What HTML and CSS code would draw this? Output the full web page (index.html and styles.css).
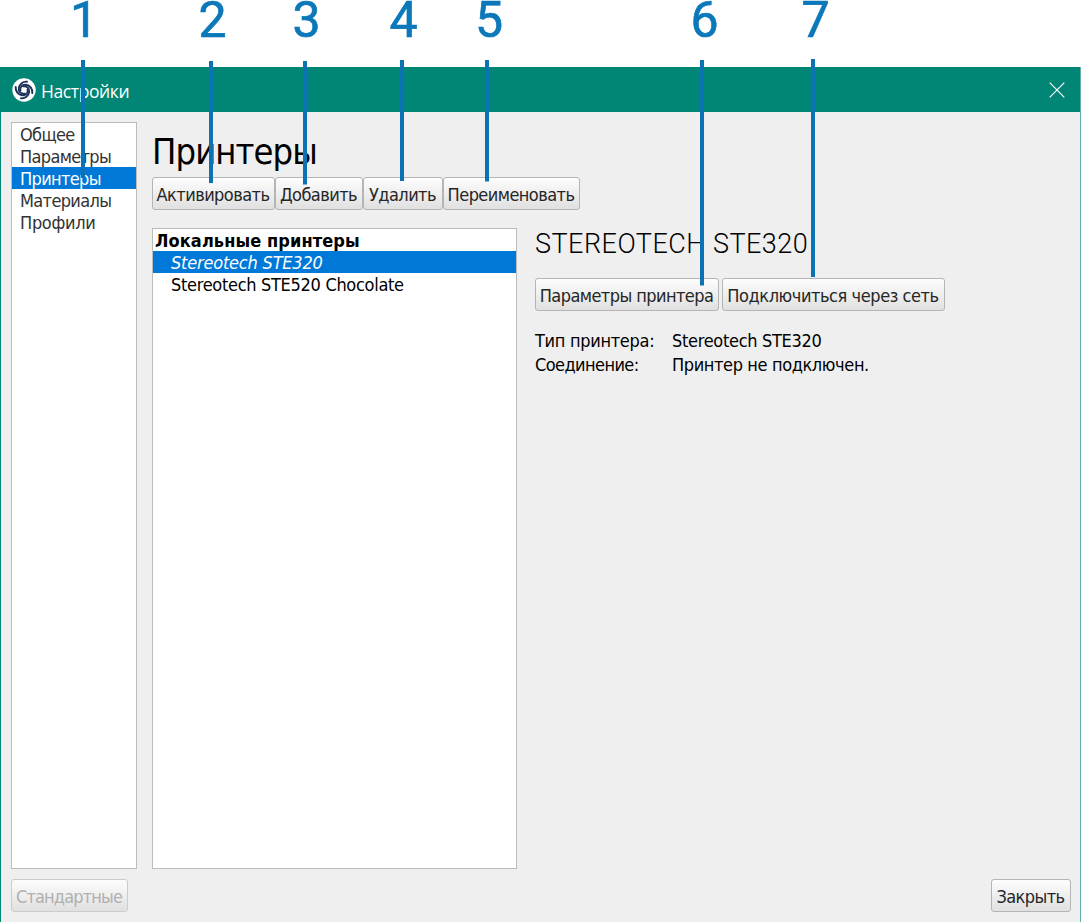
FILE: index.html
```html
<!DOCTYPE html>
<html lang="ru">
<head>
<meta charset="utf-8">
<title>Настройки</title>
<link rel="stylesheet" href="styles.css">
</head>
<body>
<div class="window">
  <header class="titlebar">
    <svg class="logo" viewBox="0 0 24 24">
      <circle cx="12" cy="12" r="11.7" fill="#fff"/>
      <g fill="none" stroke="#1c3157" stroke-width="1.900" stroke-linecap="round">
        <path id="arm" d="M8.400 12.800C7.600 9 10.500 6.200 14 6.800 18 7.500 20.800 11 20.300 15"/>
        <use href="#arm" transform="rotate(90 12 12)"/>
        <use href="#arm" transform="rotate(180 12 12)"/>
        <use href="#arm" transform="rotate(270 12 12)"/>
      </g>
    </svg>
    <span class="caption">Настройки</span>
    <svg class="close" viewBox="0 0 16 16"><path d="M.7.7 15.300 15.300M15.300.7.7 15.300" stroke="#fff" stroke-width="1.2"/></svg>
  </header>
  <div class="content">
    <nav class="sidebar">
      <div class="item">Общее</div>
      <div class="item">Параметры</div>
      <div class="item selected">Принтеры</div>
      <div class="item">Материалы</div>
      <div class="item wide">Профили</div>
    </nav>
    <main class="page">
      <h1 class="heading">Принтеры</h1>
      <div class="toolbar">
        <button class="btn activate">Активировать</button>
        <button class="btn add">Добавить</button>
        <button class="btn remove">Удалить</button>
        <button class="btn rename">Переименовать</button>
      </div>
      <div class="columns">
        <div class="printers">
          <div class="group">Локальные принтеры</div>
          <div class="printer active">Stereotech STE320</div>
          <div class="printer">Stereotech STE520 Chocolate</div>
        </div>
        <section class="details">
          <h2 class="name">STEREOTECH STE320</h2>
          <div class="actions">
            <button class="btn params">Параметры принтера</button>
            <button class="btn connect">Подключиться через сеть</button>
          </div>
          <dl class="facts">
            <dt>Тип принтера:</dt><dd>Stereotech STE320</dd>
            <dt class="tight">Соединение:</dt><dd class="state">Принтер не подключен.</dd>
          </dl>
        </section>
      </div>
    </main>
  </div>
  <footer class="footer">
    <button class="btn defaults" disabled>Стандартные</button>
    <button class="btn dismiss">Закрыть</button>
  </footer>
</div>
<svg class="callouts" viewBox="0 0 1081 922">
  <g class="leaders">
    <path d="M83 60V178M211 61V183M305 61V184.500M402 60V181M487 60V181.500M702 60V285.500M813 59V277"/>
  </g>
  <g class="numbers">
    <text x="84" y="37">1</text><text x="212.500" y="37">2</text><text x="306.500" y="37">3</text><text x="403.500" y="37">4</text><text x="489" y="37">5</text><text x="704.500" y="37">6</text><text x="815.500" y="37">7</text>
  </g>
</svg>
</body>
</html>
```
FILE: styles.css
```css
* { box-sizing: border-box; }
body {
  margin: 0;
  padding-top: 67px;
  width: 1081px;
  height: 922px;
  overflow: hidden;
  background: #fff;
  font: 18px/22px "DejaVu Sans Condensed", "DejaVu Sans", sans-serif;
  font-stretch: condensed;
  letter-spacing: -.3px;
  color: #000;
  white-space: nowrap;
}
.window {
  height: 855px;
  display: flex;
  flex-direction: column;
  background: #efefef;
  border-left: 1px solid #018574;
  border-right: 1px solid #61b2a7;
}
.titlebar {
  height: 45px;
  flex: none;
  display: flex;
  align-items: center;
  padding: 0 15px 0 11px;
  background: #018574;
  color: #fff;
}
.logo { width: 24px; height: 24px; }
.caption { flex: 1; padding: 2px 0 0 5px; font-family: "Open Sans", sans-serif; font-size: 17.5px; font-stretch: normal; letter-spacing: -.4px; }
.close { width: 16px; height: 16px; }
.content { display: flex; height: 757px; padding: 10px 10px 0; gap: 15px; }
.sidebar { width: 126px; height: 747px; border: 1px solid #bcbcbc; background: #fff; color: #333; letter-spacing: -.65px; }
.item { height: 22px; padding-left: 8px; line-height: 24px; }
.wide { letter-spacing: -.3px; }
.selected { background: #0078d7; color: #fff; }
.page { flex: 1; display: flex; flex-direction: column; }
.heading { margin: 0; height: 55px; font-size: 36px; line-height: 60px; font-weight: 400; letter-spacing: -.9px; }
.toolbar { display: flex; height: 33px; }
.btn {
  height: 33px;
  padding: 2px 1px 0 0;
  border: 1px solid #b5b5b5;
  border-radius: 3px;
  background: linear-gradient(#fdfdfd, #e0e0e0);
  color: #262626;
  font: inherit;
  letter-spacing: -.56px;
  text-align: center;
}
.activate { width: 123px; }
.add { width: 88px; }
.remove { width: 80px; }
.rename { width: 137px; }
.columns { display: flex; gap: 18px; padding-top: 18px; }
.printers { width: 365px; height: 641px; border: 1px solid #bcbcbc; background: #fff; }
.group { height: 22px; padding-left: 2px; font-weight: 700; line-height: 24px; letter-spacing: .1px; }
.printer { height: 22px; padding-left: 18px; line-height: 24px; }
.active { background: #0078d7; color: #fff; font-style: italic; letter-spacing: -.2px; }
.name { margin: 0; height: 50px; font: 300 27px/32px Roboto, sans-serif; letter-spacing: .48px; }
.actions { display: flex; gap: 3px; }
.params { width: 184px; }
.connect { width: 223px; letter-spacing: -.43px; }
.facts { display: grid; grid-template-columns: 137px auto; grid-auto-rows: 24px; margin: 18px 0 0; line-height: 24px; }
.facts dd { margin: 0; }
.tight { letter-spacing: -.58px; }
.facts .state { letter-spacing: -.38px; }
.footer { display: flex; justify-content: space-between; padding: 10px 9px 0 10px; }
.defaults { width: 117px; color: #b0b0b0; border-color: #ccc; letter-spacing: -.85px; }
.dismiss { width: 80px; }
.callouts { position: absolute; left: 0; top: 0; width: 1081px; height: 922px; pointer-events: none; }
.leaders { stroke: #0b73b3; stroke-width: 4; fill: none; }
.numbers { font: 400 50px Roboto, sans-serif; letter-spacing: 0; fill: #0b78b9; stroke: #0b78b9; stroke-width: .7; text-anchor: middle; }
```
